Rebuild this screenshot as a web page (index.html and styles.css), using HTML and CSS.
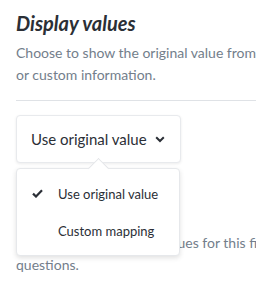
FILE: index.html
```html
<!DOCTYPE html>
<html lang="en">
<head>
  <meta charset="UTF-8">
  <title>Display values</title>
  <meta name="viewport" content="width=device-width, initial-scale=1.0">
  <link rel="stylesheet" href="styles.css">
</head>
<body>
  <div class="panel">
    <h2 class="title">Display values</h2>
    <p class="desc">Choose to show the original value from the data source<br>or custom information.</p>
    <hr class="divider">

    <div class="picker">
      <button class="picker-btn">
        Use original value
        <svg class="chevron" width="10" height="7" viewBox="0 0 10 7"><path d="M1.2 1.3 L5 5 L8.8 1.3" fill="none" stroke="#2b2f36" stroke-width="2"/></svg>
      </button>

      <div class="menu">
        <div class="menu-item">
          <svg class="check" width="11" height="9" viewBox="0 0 11 9"><path d="M1 4.6 L4 7.5 L10 1.3" fill="none" stroke="#2b2f36" stroke-width="2.2"/></svg>
          <span>Use original value</span>
        </div>
        <div class="menu-item">
          <span>Custom mapping</span>
        </div>
      </div>
    </div>

    <p class="desc note">Provide custom display values for this field in<br>questions.</p>
  </div>
</body>
</html>
```

FILE: styles.css
```css
body {
  font-family: Lato, 'Noto Sans', sans-serif;
  background: #ffffff;
  margin: 0;
  padding: 0;
  overflow: hidden;
}
.panel {
  width: 420px;
  padding: 11px 16px 0;
}
.title {
  font-size: 20px;
  line-height: 24px;
  font-style: italic;
  font-weight: bold;
  color: #2b2f36;
  margin: 0 0 7px;
}
.desc {
  font-size: 14px;
  line-height: 22px;
  color: #737e8b;
  margin: 0;
}
.divider {
  border: none;
  border-top: 1px solid #dfe2e6;
  margin: 14px 0 14px;
}
.picker {
  position: relative;
}
.picker-btn {
  display: flex;
  align-items: center;
  gap: 8px;
  width: 165px;
  height: 48px;
  padding: 0 14px;
  background: white;
  border: 1px solid #e8eaed;
  border-radius: 4px;
  box-shadow: 0 1px 3px rgba(0,0,0,0.08);
  font-family: Lato, sans-serif;
  font-size: 15px;
  color: #2b2f36;
  white-space: nowrap;
  box-sizing: border-box;
}
.chevron {
  margin-top: 1px;
}
.menu {
  position: absolute;
  top: 53px;
  left: 0;
  width: 164px;
  padding: 6px 0;
  background: white;
  border: 1px solid #e6e8eb;
  border-radius: 4px;
  box-shadow: 0 2px 5px rgba(0,0,0,0.12);
  box-sizing: border-box;
  z-index: 2;
}
.menu::before {
  content: "";
  position: absolute;
  top: -8px;
  left: 74px;
  width: 14px;
  height: 14px;
  background: white;
  border-left: 1px solid #e3e5e8;
  border-top: 1px solid #e3e5e8;
  transform: rotate(45deg);
}
.menu-item {
  position: relative;
  display: flex;
  align-items: center;
  height: 37px;
  padding-left: 41px;
  font-size: 13px;
  color: #2b2f36;
}
.check {
  position: absolute;
  left: 15px;
  top: 14px;
}
.note {
  margin-top: 69px;
}
```
